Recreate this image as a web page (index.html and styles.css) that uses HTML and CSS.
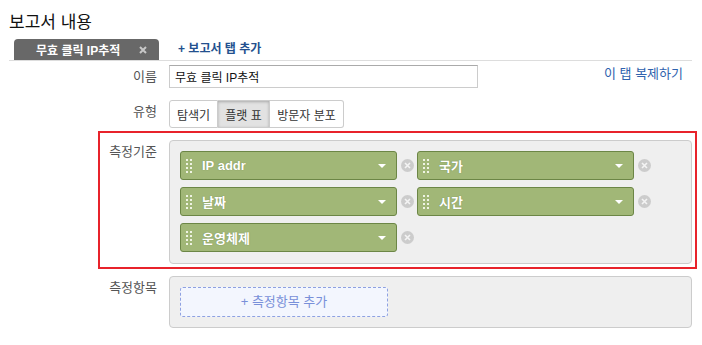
FILE: index.html
```html
<!DOCTYPE html>
<html lang="ko">
<head>
    <meta charset="UTF-8">
    <meta name="viewport" content="width=device-width, initial-scale=1.0">
    <title>보고서 내용</title>
    <link rel="stylesheet" href="styles.css">
</head>
<body>
<div class="page">
    <h2 class="title">보고서 내용</h2>

    <div class="tabs">
        <div class="tab">무효 클릭 IP추적
            <svg class="tab-close" width="8" height="8" viewBox="0 0 8 8"><path d="M1 1L7 7M7 1L1 7" stroke="#c8c8c8" stroke-width="2"/></svg>
        </div>
        <a class="tab-add" href="#">+ 보고서 탭 추가</a>
    </div>

    <div class="row first">
        <div class="label">이름</div>
        <div class="field">
            <input class="name-input" type="text" value="무효 클릭 IP추적">
            <a class="copy-link" href="#">이 탭 복제하기</a>
        </div>
    </div>

    <div class="row">
        <div class="label">유형</div>
        <div class="field">
            <div class="btn-group">
                <button class="btn explorer">탐색기</button>
                <button class="btn flat active">플랫 표</button>
                <button class="btn visitors">방문자 분포</button>
            </div>
        </div>
    </div>

    <div class="row marked">
        <div class="label">측정기준</div>
        <div class="field">
            <div class="box dims">
                <div class="dim">
                    <div class="pill">
                        <svg class="grip" width="6" height="14" viewBox="0 0 6 14"><g fill="#eef3e2"><rect x="0" y="0" width="2" height="2"/><rect x="4" y="0" width="2" height="2"/><rect x="0" y="4" width="2" height="2"/><rect x="4" y="4" width="2" height="2"/><rect x="0" y="8" width="2" height="2"/><rect x="4" y="8" width="2" height="2"/><rect x="0" y="12" width="2" height="2"/><rect x="4" y="12" width="2" height="2"/></g></svg>
                        <span class="pill-text">IP addr</span>
                        <span class="caret"></span>
                    </div>
                    <svg class="remove" width="13" height="13" viewBox="0 0 13 13"><circle cx="6.5" cy="6.5" r="6.5" fill="#cccccc"/><path d="M4 4L9 9M9 4L4 9" stroke="#f4f4f4" stroke-width="1.6"/></svg>
                </div>
                <div class="dim">
                    <div class="pill">
                        <svg class="grip" width="6" height="14" viewBox="0 0 6 14"><g fill="#eef3e2"><rect x="0" y="0" width="2" height="2"/><rect x="4" y="0" width="2" height="2"/><rect x="0" y="4" width="2" height="2"/><rect x="4" y="4" width="2" height="2"/><rect x="0" y="8" width="2" height="2"/><rect x="4" y="8" width="2" height="2"/><rect x="0" y="12" width="2" height="2"/><rect x="4" y="12" width="2" height="2"/></g></svg>
                        <span class="pill-text">국가</span>
                        <span class="caret"></span>
                    </div>
                    <svg class="remove" width="13" height="13" viewBox="0 0 13 13"><circle cx="6.5" cy="6.5" r="6.5" fill="#cccccc"/><path d="M4 4L9 9M9 4L4 9" stroke="#f4f4f4" stroke-width="1.6"/></svg>
                </div>
                <div class="dim">
                    <div class="pill">
                        <svg class="grip" width="6" height="14" viewBox="0 0 6 14"><g fill="#eef3e2"><rect x="0" y="0" width="2" height="2"/><rect x="4" y="0" width="2" height="2"/><rect x="0" y="4" width="2" height="2"/><rect x="4" y="4" width="2" height="2"/><rect x="0" y="8" width="2" height="2"/><rect x="4" y="8" width="2" height="2"/><rect x="0" y="12" width="2" height="2"/><rect x="4" y="12" width="2" height="2"/></g></svg>
                        <span class="pill-text">날짜</span>
                        <span class="caret"></span>
                    </div>
                    <svg class="remove" width="13" height="13" viewBox="0 0 13 13"><circle cx="6.5" cy="6.5" r="6.5" fill="#cccccc"/><path d="M4 4L9 9M9 4L4 9" stroke="#f4f4f4" stroke-width="1.6"/></svg>
                </div>
                <div class="dim">
                    <div class="pill">
                        <svg class="grip" width="6" height="14" viewBox="0 0 6 14"><g fill="#eef3e2"><rect x="0" y="0" width="2" height="2"/><rect x="4" y="0" width="2" height="2"/><rect x="0" y="4" width="2" height="2"/><rect x="4" y="4" width="2" height="2"/><rect x="0" y="8" width="2" height="2"/><rect x="4" y="8" width="2" height="2"/><rect x="0" y="12" width="2" height="2"/><rect x="4" y="12" width="2" height="2"/></g></svg>
                        <span class="pill-text">시간</span>
                        <span class="caret"></span>
                    </div>
                    <svg class="remove" width="13" height="13" viewBox="0 0 13 13"><circle cx="6.5" cy="6.5" r="6.5" fill="#cccccc"/><path d="M4 4L9 9M9 4L4 9" stroke="#f4f4f4" stroke-width="1.6"/></svg>
                </div>
                <div class="dim">
                    <div class="pill">
                        <svg class="grip" width="6" height="14" viewBox="0 0 6 14"><g fill="#eef3e2"><rect x="0" y="0" width="2" height="2"/><rect x="4" y="0" width="2" height="2"/><rect x="0" y="4" width="2" height="2"/><rect x="4" y="4" width="2" height="2"/><rect x="0" y="8" width="2" height="2"/><rect x="4" y="8" width="2" height="2"/><rect x="0" y="12" width="2" height="2"/><rect x="4" y="12" width="2" height="2"/></g></svg>
                        <span class="pill-text">운영체제</span>
                        <span class="caret"></span>
                    </div>
                    <svg class="remove" width="13" height="13" viewBox="0 0 13 13"><circle cx="6.5" cy="6.5" r="6.5" fill="#cccccc"/><path d="M4 4L9 9M9 4L4 9" stroke="#f4f4f4" stroke-width="1.6"/></svg>
                </div>
            </div>
        </div>
    </div>

    <div class="row">
        <div class="label">측정항목</div>
        <div class="field">
            <div class="box metrics">
                <div class="add-metric">+ 측정항목 추가</div>
            </div>
        </div>
    </div>
</div>
</body>
</html>
```

FILE: styles.css
```css
body {
    margin: 0;
    padding: 0;
    background-color: #fff;
    font-family: "Liberation Sans", Arial, "Noto Sans CJK KR", sans-serif;
    color: #222;
}
.page {
    width: 683px;
    padding-left: 9px;
}
.title {
    margin: 0;
    padding-top: 12px;
    font-size: 17px;
    line-height: 22px;
    font-weight: normal;
    color: #111;
}
.tabs {
    display: flex;
    align-items: flex-end;
    height: 21px;
    margin-top: 5px;
    padding-left: 5px;
    border-bottom: 1px solid #ddd;
}
.tab {
    display: flex;
    align-items: center;
    width: 145px;
    height: 21px;
    box-sizing: border-box;
    padding: 0 12px 0 22px;
    background-color: #686868;
    color: #fff;
    font-size: 12px;
    font-weight: bold;
    border-radius: 4px 4px 0 0;
}
.tab-close {
    margin-left: auto;
}
.tab-add {
    margin-left: 19px;
    line-height: 21px;
    font-size: 12px;
    font-weight: bold;
    color: #23508e;
    text-decoration: none;
}
.row {
    display: flex;
    margin-top: 12px;
}
.row.first {
    margin-top: 4px;
}
.label {
    width: 160px;
    box-sizing: border-box;
    padding-right: 12px;
    text-align: right;
    font-size: 13px;
    line-height: 23px;
    color: #555;
}
.field {
    flex: 1;
    display: flex;
    align-items: flex-start;
}
.name-input {
    width: 309px;
    height: 23px;
    box-sizing: border-box;
    margin: 0;
    padding: 0 5px;
    border: 1px solid #ccc;
    border-top-color: #aaa;
    font-family: inherit;
    font-size: 12px;
    color: #111;
}
.copy-link {
    margin-left: auto;
    margin-right: 9px;
    font-size: 13px;
    line-height: 18px;
    color: #2f62ae;
    text-decoration: none;
}
.btn-group {
    display: flex;
    height: 28px;
}
.btn {
    height: 28px;
    margin: 0;
    padding: 0;
    border: 1px solid #ccc;
    border-left: none;
    background-color: #fff;
    font-family: inherit;
    font-size: 12px;
    color: #333;
}
.btn.explorer {
    width: 49px;
    border-left: 1px solid #ccc;
    border-radius: 3px 0 0 3px;
}
.btn.flat {
    width: 52px;
}
.btn.visitors {
    width: 74px;
    border-radius: 0 3px 3px 0;
}
.btn.active {
    background-color: #e2e2e2;
    box-shadow: inset 0 1px 3px rgba(0, 0, 0, 0.25);
}
.box {
    flex: 1;
    background-color: #efefef;
    border: 1px solid #ccc;
    border-radius: 4px;
}
.dims {
    display: grid;
    grid-template-columns: repeat(2, 237px);
    row-gap: 7px;
    padding: 10px 0 11px 10px;
}
.dim {
    display: flex;
    align-items: center;
}
.pill {
    display: flex;
    align-items: center;
    width: 217px;
    height: 29px;
    box-sizing: border-box;
    padding-left: 5px;
    background-color: #a1b777;
    border: 1px solid #6c8646;
    border-radius: 3px;
}
.pill-text {
    margin-left: 10px;
    font-size: 13px;
    font-weight: bold;
    color: #fff;
    text-shadow: 0 0 1px rgba(60, 80, 30, 0.5);
}
.caret {
    margin-left: auto;
    margin-right: 10px;
    width: 0;
    height: 0;
    border-left: 4px solid transparent;
    border-right: 4px solid transparent;
    border-top: 4px solid #fff;
}
.remove {
    margin-left: 4px;
}
.metrics {
    padding: 10px;
}
.add-metric {
    width: 208px;
    height: 30px;
    box-sizing: border-box;
    border: 1px dashed #8ea1e2;
    border-radius: 3px;
    background-color: #f3f6fe;
    color: #7990d9;
    font-size: 13px;
    line-height: 28px;
    text-align: center;
}
.marked {
    position: relative;
}
.marked::after {
    content: "";
    position: absolute;
    left: 89px;
    top: -9px;
    right: -5px;
    bottom: -5px;
    border: 2px solid #e8232b;
    pointer-events: none;
}
```
